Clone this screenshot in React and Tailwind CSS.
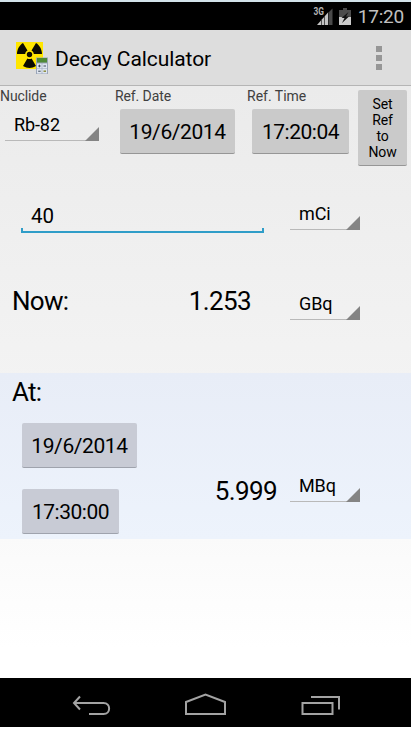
const Spinner = ({ value, className }) => {
  return (
    <div className={`relative border-b border-[#b9b9b9] text-[18px] tracking-[-0.1px] ${className}`}>
      <span>{value}</span>
      <svg className="absolute -bottom-px right-0" width="14" height="14" viewBox="0 0 14 14">
        <path d="M14 0V14H0z" fill="#848484" />
      </svg>
    </div>
  );
};

const Button = ({ children, className }) => {
  return (
    <button className={`flex items-center justify-center rounded-[2px] border-b whitespace-nowrap ${className}`}>
      {children}
    </button>
  );
};

const StatusBar = () => {
  return (
    <div className="flex h-[30px] items-center justify-end border-t-2 border-[#d3e3ea] bg-black pr-[7px] text-[#c0c0c0]">
      <svg width="39" height="20" viewBox="0 0 39 20">
        <text x="1.5" y="8.5" fontSize="10" fontWeight="700" fill="#b5b5b5" textLength="10.5" lengthAdjust="spacingAndGlyphs">
          3G
        </text>
        <path d="M20.5 2.5V19H16.5V6.5z" fill="#4a4a4a" />
        <path d="M16 6.500V19H5z" fill="#c4c4c4" />
        <path d="M9.500 13V19M12.500 10V19" stroke="#333" strokeWidth="0.8" />
        <path d="M31 2h4v2h4v7H27V4h4z" fill="#4c4c4c" />
        <path d="M27 11H39V19H27z" fill="#cccccc" />
        <path d="M36.500 6L29.500 12H32.500L30 17L37 10.500H34z" fill="#111" />
      </svg>
      <span className="mt-[2px] ml-[7px] text-[19px] leading-[28px] tracking-[-0.2px]">17:20</span>
    </div>
  );
};

const AppIcon = () => {
  return (
    <svg width="34" height="34" viewBox="0 0 34 34">
      <rect x="1" y="1" width="27" height="27" fill="#ffe600" />
      <g fill="#0c0c00">
        <circle cx="14.5" cy="13.5" r="2.7" />
        <path d="M10.2 13L2 13C2 8.500 4.500 4 8 2L12.500 9.500C11 10.300 10.300 11.500 10.200 13z" />
        <path d="M18.800 13L27 13C27 8.500 24.500 4 21 2L16.500 9.500C18 10.300 18.700 11.500 18.800 13z" />
        <path d="M12.400 17.400L8 25C12 27.600 17 27.600 21 25L16.600 17.400C15.300 18.200 13.700 18.200 12.400 17.400z" />
      </g>
      <rect x="21" y="16.500" width="12" height="16.500" fill="#9aa5b8" />
      <rect x="22" y="17" width="10" height="4.500" fill="#4f8a35" />
      <path d="M22 22.500h4.700v4.700H22zM27.300 22.500H32v4.700h-4.700zM22 27.800h4.700v4.700H22zM27.300 27.800H32v4.700h-4.700z" fill="#dfe6f0" />
      <path d="M23.200 25h2.500M24.450 23.700v2.600M28.500 25H31M23.200 30.200h2.500" stroke="#3f4a58" strokeWidth="1" />
      <path d="M28.500 30.200H31" stroke="#8a8a3a" strokeWidth="1.5" />
    </svg>
  );
};

const ActionBar = () => {
  return (
    <div className="flex h-[56px] items-center border-b border-[#b5b5b5] bg-[#dddddd] pr-[29px] pl-[15px]">
      <AppIcon />
      <h1 className="mt-[4px] ml-[6px] flex-1 text-[21px] tracking-[-0.08px] whitespace-nowrap">Decay Calculator</h1>
      <div className="flex flex-col gap-[3px]">
        <span className="h-[6px] w-[6px] bg-[#969696]" />
        <span className="h-[6px] w-[6px] bg-[#969696]" />
        <span className="h-[6px] w-[6px] bg-[#969696]" />
      </div>
    </div>
  );
};

const NavBar = () => {
  return (
    <div className="h-[49px] bg-black">
      <svg width="411" height="49" viewBox="0 0 411 49" fill="none" stroke="#a3a3a3" strokeWidth="2">
        <path d="M74 25H103.500C111 25 111 36 103.500 36H89M80 18.500L74 25L80 31.500" />
        <path d="M186 36V24L205.500 16.500L225 24V36z" />
        <path d="M302.500 25H332.500V36H302.500zM311 19H339V31.500" />
      </svg>
    </div>
  );
};

const grayButton = 'border-[#969696] bg-[#cacaca]';
const blueButton = 'border-[#9fa3ad] bg-[#c8cbd5]';

const App = () => {
  return (
    <div className="flex h-[729px] w-[411px] flex-col overflow-hidden bg-white font-[Roboto,sans-serif] text-black">
      <StatusBar />
      <ActionBar />

      <main className="flex-1 bg-linear-to-b from-[#ebebeb] via-[#f3f3f3] via-50% to-white to-95%">
        {/* Reference activity */}
        <div className="flex h-[87px] items-start text-[14px] text-[#404040]">
          <div className="w-[115px]">
            <p className="h-[23px] leading-[20px] tracking-[-0.1px]">Nuclide</p>
            <Spinner value="Rb-82" className="ml-[5px] h-[32px] w-[94px] pl-[9px] leading-[32px] text-black" />
          </div>
          <div className="w-[132px]">
            <p className="h-[23px] leading-[20px] tracking-[-0.1px]">Ref. Date</p>
            <Button className={`ml-[5px] h-[45px] w-[115px] pt-[3px] text-[21px] tracking-[-0.4px] text-black ${grayButton}`}>
              19/6/2014
            </Button>
          </div>
          <div className="w-[111px]">
            <p className="h-[23px] leading-[20px]">Ref. Time</p>
            <Button className={`ml-[5px] h-[45px] w-[97px] pt-[3px] text-[21px] tracking-[-0.5px] text-black ${grayButton}`}>
              17:20:04
            </Button>
          </div>
          <Button className={`mt-[4px] h-[76px] w-[49px] pt-[1px] text-[14px] leading-[16px] tracking-[-0.1px] text-black ${grayButton}`}>
            <span>
              Set
              <br />
              Ref
              <br />
              to
              <br />
              Now
            </span>
          </Button>
        </div>

        <div className="flex h-[85px] pt-[25px]">
          <div className="ml-[21px] flex h-[35px] w-[243px] flex-col justify-end">
            <span className="pl-[10px] text-[20.5px] leading-[24px]">40</span>
            <span className="h-[5px] border-x-2 border-b-2 border-[#2f9dc8]" />
          </div>
          <Spinner value="mCi" className="ml-[26px] h-[32px] w-[70px] pl-[9px] leading-[32px]" />
        </div>

        <div className="flex h-[115px] pt-[30px] text-[26px] leading-[26px]">
          <span className="ml-[12px] w-[89px] tracking-[-0.7px]">Now:</span>
          <span className="w-[150px] text-right tracking-[-0.6px]">1.253</span>
          <Spinner value="GBq" className="ml-[39px] h-[32px] w-[70px] pl-[9px] leading-[32px]" />
        </div>

        {/* Activity at another time */}
        <div className="h-[166px] bg-linear-to-b from-[#e8edf7] to-[#edf3fc]">
          <p className="h-[50px] pt-[6px] pl-[12px] text-[26px] leading-[26px] tracking-[-0.7px]">At:</p>
          <div className="flex">
            <div className="ml-[22px] flex w-[115px] flex-col gap-[21px]">
              <Button className={`h-[45px] w-[115px] pt-[3px] text-[21px] tracking-[-0.4px] ${blueButton}`}>19/6/2014</Button>
              <Button className={`h-[45px] w-[97px] pt-[3px] text-[21px] tracking-[-0.5px] ${blueButton}`}>17:30:00</Button>
            </div>
            <span className="mt-[55px] w-[140px] text-right text-[26px] leading-[26px] tracking-[-0.6px]">5.999</span>
            <Spinner value="MBq" className="mt-[47px] ml-[13px] h-[32px] w-[70px] pl-[9px] leading-[32px]" />
          </div>
        </div>
      </main>

      <NavBar />
      <div className="h-[2px] bg-white" />
    </div>
  );
};

export default App;
